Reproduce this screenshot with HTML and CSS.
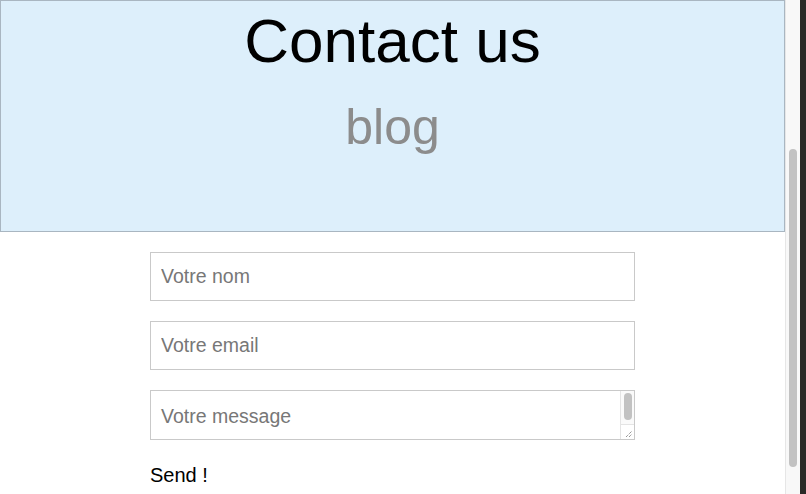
FILE: index.html
```html
<!DOCTYPE html>
<html lang="fr">
<head>
<meta charset="utf-8">
<title>Contact us</title>
<link rel="stylesheet" href="styles.css">
</head>
<body>
<div class="page">
  <header class="hero">
    <h1 class="title">Contact us</h1>
    <p class="sub">blog</p>
  </header>
  <form class="contact">
    <input class="field" type="text" placeholder="Votre nom">
    <input class="field" type="email" placeholder="Votre email">
    <div class="msg">
      <textarea class="field area" placeholder="Votre message"></textarea>
      <div class="tscroll">
        <div class="ttrack"><div class="tthumb"></div></div>
        <div class="tcorner">
          <svg width="13" height="14" viewBox="0 0 13 14"><path d="M5 12 L11 6 M8 12 L11 9" stroke="#6b6b6b" stroke-width="1" fill="none" stroke-dasharray="1 1"/></svg>
        </div>
      </div>
    </div>
    <button class="send" type="button">Send !</button>
  </form>
</div>
<div class="vscroll"><div class="vthumb"></div></div>
<div class="edge"></div>
</body>
</html>
```
FILE: styles.css
```css
html, body {
  margin: 0;
  height: 494px;
  overflow: hidden;
}
body {
  display: flex;
  font-family: "Liberation Sans", Arial, sans-serif;
  background: #fff;
}
.page {
  flex: 0 0 785px;
  display: flex;
  flex-direction: column;
}
.hero {
  box-sizing: border-box;
  height: 232px;
  border: 1px solid #a9b6c1;
  background: #ddeffb;
  text-align: center;
}
.title {
  margin: 0;
  padding-top: 4px;
  font-size: 62px;
  font-weight: normal;
  line-height: 72px;
  color: #000;
}
.sub {
  margin: 21px 0 0;
  font-size: 50px;
  line-height: 58px;
  color: #8c8c8c;
}
.contact {
  width: 485px;
  margin: 20px auto 0;
  display: flex;
  flex-direction: column;
  gap: 20px;
}
.field {
  box-sizing: border-box;
  width: 100%;
  height: 49px;
  margin: 0;
  border: 1px solid #c9c9c9;
  border-radius: 0;
  padding: 0 10px;
  font-family: "Liberation Sans", Arial, sans-serif;
  font-size: 19.5px;
  color: #333;
  background: #fff;
  outline: none;
}
.field::placeholder {
  color: #777;
}
.msg {
  position: relative;
  height: 50px;
}
.area {
  display: block;
  height: 50px;
  padding: 14px 10px 0;
  resize: none;
  overflow: hidden;
}
.tscroll {
  position: absolute;
  top: 1px;
  right: 1px;
  bottom: 1px;
  width: 13px;
  border-left: 1px solid #e4e4e4;
  background: #fafafa;
  display: flex;
  flex-direction: column;
}
.ttrack {
  flex: 1;
  display: flex;
  justify-content: center;
  padding-top: 2px;
}
.tthumb {
  width: 8px;
  height: 27px;
  border-radius: 4px;
  background: #c2c2c2;
}
.tcorner {
  height: 14px;
  border-top: 1px solid #e4e4e4;
  background: #fff;
  display: flex;
}
.send {
  align-self: flex-start;
  margin-top: 4px;
  padding: 0;
  border: 0;
  background: none;
  font-family: "Liberation Sans", Arial, sans-serif;
  font-size: 20px;
  color: #000;
  cursor: pointer;
}
.vscroll {
  box-sizing: border-box;
  flex: 0 0 15px;
  border-left: 1px solid #e6e6e6;
  background: #f8f8f8;
  padding: 149px 0 27px;
  display: flex;
  justify-content: center;
}
.vthumb {
  width: 8px;
  border-radius: 4px;
  background: #c2c2c2;
}
.edge {
  flex: 0 0 6px;
  background: #2a2a27;
}
```
